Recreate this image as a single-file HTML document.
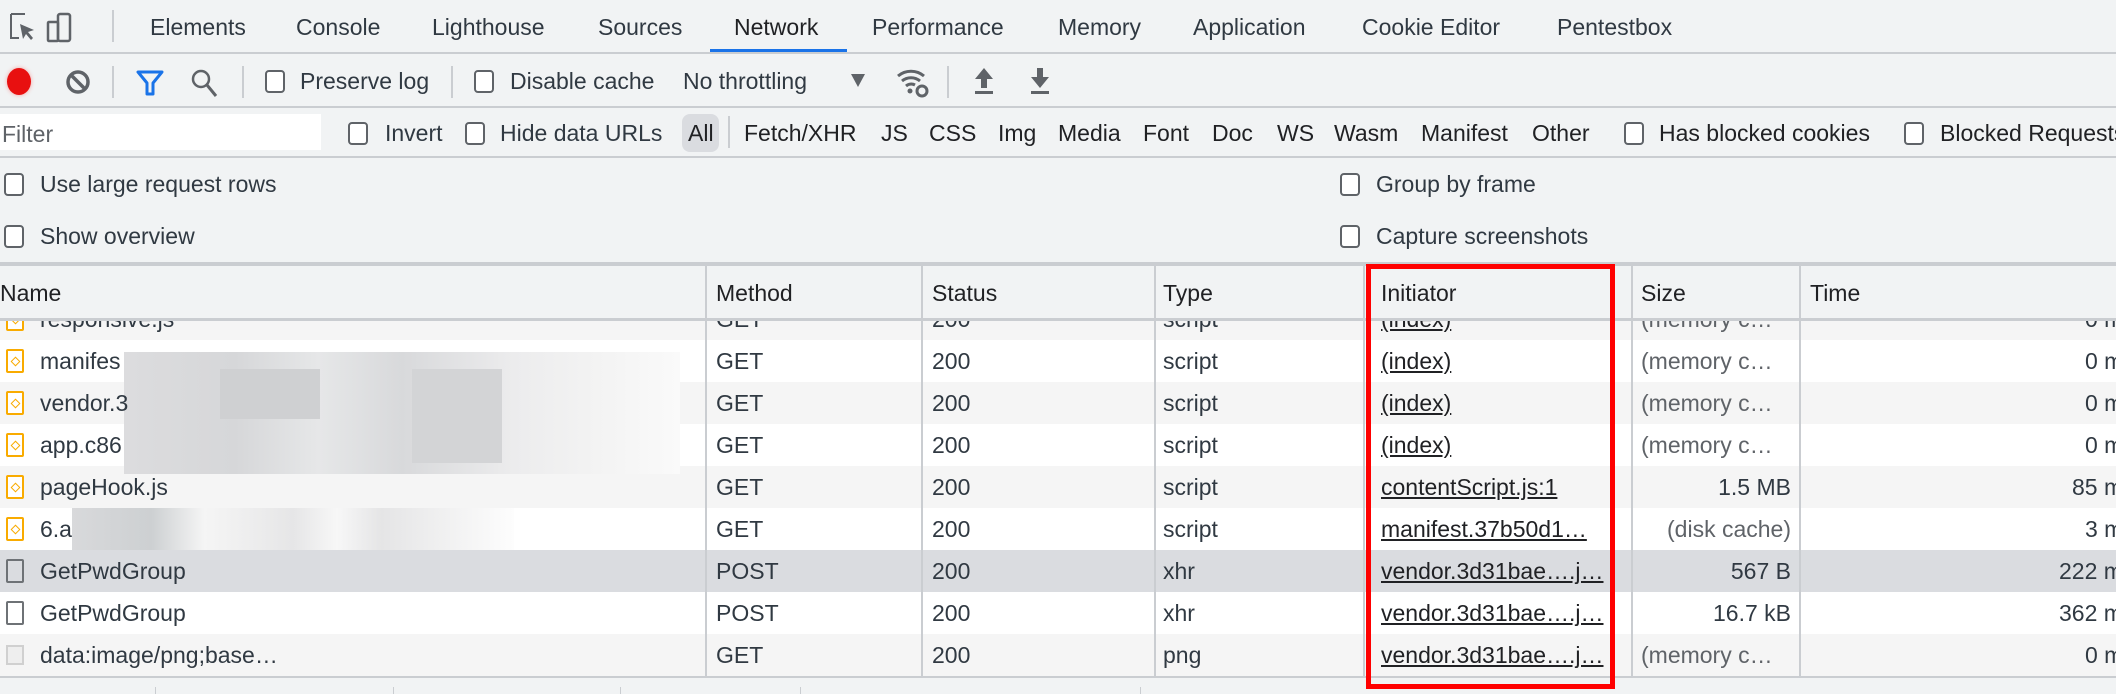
<!DOCTYPE html>
<html><head><meta charset="utf-8"><style>
*{margin:0;padding:0;box-sizing:border-box}
body{width:2116px;height:694px;overflow:hidden;background:#f1f3f4;font-family:"Liberation Sans",sans-serif;font-size:23px;color:#303942;position:relative}
.a{position:absolute;white-space:nowrap}
.t{height:30px;line-height:30px}
.cb{position:absolute;width:20px;height:23px;border:2px solid #5f6368;border-radius:4px;background:#fff}
.hl{position:absolute;left:0;width:2116px;background:#cacdd1}
.vs{position:absolute;width:2px;background:#cacdd1}
.row{position:absolute;left:0;width:2116px;height:42px}
.u{text-decoration:underline}
.ic{position:absolute;left:6px;width:18px;height:24px;border:2px solid #f9ab00;border-radius:2px;background:#fff}
.ic:after{content:"";position:absolute;left:4px;top:7px;width:5px;height:5px;border:1.5px solid #f9ab00;transform:rotate(45deg)}
.dc{position:absolute;left:6px;width:18px;height:24px;border:2px solid #6e7276;border-radius:2px;background:#fff}
</style></head><body>
<!-- tab bar -->
<svg class="a" style="left:8px;top:12px" width="70" height="32" viewBox="0 0 70 32">
<path d="M3 2h14M3 2v24h8M3 2" stroke="#5f6368" stroke-width="2" fill="none"/>
<path d="M12 12l14 6-6 2 5 6-2 2-5-6-3 5z" fill="#5f6368"/>
<rect x="50" y="2" width="12" height="27" rx="2" stroke="#5f6368" stroke-width="2.5" fill="none"/>
<rect x="40" y="10" width="10" height="19" rx="1" stroke="#5f6368" stroke-width="2.5" fill="none"/>
</svg>
<div class="vs" style="left:112px;top:10px;height:32px"></div>
<div class="a t" style="left:150px;top:12px">Elements</div>
<div class="a t" style="left:296px;top:12px">Console</div>
<div class="a t" style="left:432px;top:12px">Lighthouse</div>
<div class="a t" style="left:598px;top:12px">Sources</div>
<div class="a t" style="left:734px;top:12px;color:#202124">Network</div>
<div class="a t" style="left:872px;top:12px">Performance</div>
<div class="a t" style="left:1058px;top:12px">Memory</div>
<div class="a t" style="left:1193px;top:12px">Application</div>
<div class="a t" style="left:1362px;top:12px">Cookie Editor</div>
<div class="a t" style="left:1557px;top:12px">Pentestbox</div>
<div class="a" style="left:710px;top:49px;width:137px;height:4px;background:#1a73e8"></div>
<div class="hl" style="top:52px;height:2px"></div>
<!-- toolbar -->
<div class="a" style="left:7px;top:68px;width:24px;height:27px;border-radius:50%;background:#e81010;box-shadow:0 0 4px #f5a0a0"></div>
<svg class="a" style="left:64px;top:68px" width="28" height="28" viewBox="0 0 28 28"><circle cx="14" cy="14" r="10" stroke="#5f6368" stroke-width="3.5" fill="none"/><path d="M7 7l14 14" stroke="#5f6368" stroke-width="3.5"/></svg>
<div class="vs" style="left:112px;top:66px;height:32px"></div>
<svg class="a" style="left:136px;top:70px" width="28" height="26" viewBox="0 0 28 26"><path d="M2 2h24l-9 11v11h-6V13z" stroke="#1a73e8" stroke-width="3" fill="none" stroke-linejoin="round"/></svg>
<svg class="a" style="left:190px;top:68px" width="28" height="30" viewBox="0 0 28 30"><circle cx="11" cy="11" r="8" stroke="#5f6368" stroke-width="2.5" fill="none"/><path d="M17 17l9 11" stroke="#5f6368" stroke-width="3"/></svg>
<div class="vs" style="left:242px;top:66px;height:32px"></div>
<div class="cb" style="left:265px;top:70px"></div>
<div class="a t" style="left:300px;top:66px">Preserve log</div>
<div class="vs" style="left:451px;top:66px;height:32px"></div>
<div class="cb" style="left:474px;top:70px"></div>
<div class="a t" style="left:510px;top:66px">Disable cache</div>
<div class="a t" style="left:683px;top:66px">No throttling</div>
<div class="a" style="left:851px;top:74px;width:0;height:0;border-left:7px solid transparent;border-right:7px solid transparent;border-top:13px solid #5f6368"></div>
<svg class="a" style="left:895px;top:66px" width="36" height="32" viewBox="0 0 36 32"><path d="M3 10a20 20 0 0 1 26 0M7 15a14 14 0 0 1 18 0M11 20a8 8 0 0 1 9-1" stroke="#5f6368" stroke-width="3" fill="none"/><circle cx="15" cy="25" r="2.5" fill="#5f6368"/><circle cx="27" cy="25" r="5" stroke="#5f6368" stroke-width="3" fill="none"/></svg>
<div class="vs" style="left:947px;top:66px;height:32px"></div>
<svg class="a" style="left:972px;top:66px" width="24" height="30" viewBox="0 0 24 30"><path d="M12 2L3 13h6v9h6v-9h6z" fill="#5f6368"/><rect x="3" y="25" width="18" height="3" fill="#5f6368"/></svg>
<svg class="a" style="left:1028px;top:66px" width="24" height="30" viewBox="0 0 24 30"><path d="M12 22L3 11h6V2h6v9h6z" fill="#5f6368"/><rect x="3" y="25" width="18" height="3" fill="#5f6368"/></svg>
<div class="hl" style="top:106px;height:2px"></div>
<!-- filter row -->
<div class="a" style="left:0;top:114px;width:321px;height:36px;background:#fff"></div>
<div class="a t" style="left:2px;top:119px;color:#5f6368">Filter</div>
<div class="cb" style="left:348px;top:122px"></div>
<div class="a t" style="left:385px;top:118px">Invert</div>
<div class="cb" style="left:465px;top:122px"></div>
<div class="a t" style="left:500px;top:118px">Hide data URLs</div>
<div class="a" style="left:682px;top:114px;width:37px;height:38px;border-radius:8px;background:#dadce0"></div>
<div class="a t" style="left:688px;top:118px;color:#202124">All</div>
<div class="vs" style="left:728px;top:116px;height:32px"></div>
<div class="a t" style="left:744px;top:118px;color:#202124">Fetch/XHR</div>
<div class="a t" style="left:881px;top:118px;color:#202124">JS</div>
<div class="a t" style="left:929px;top:118px;color:#202124">CSS</div>
<div class="a t" style="left:998px;top:118px;color:#202124">Img</div>
<div class="a t" style="left:1058px;top:118px;color:#202124">Media</div>
<div class="a t" style="left:1143px;top:118px;color:#202124">Font</div>
<div class="a t" style="left:1212px;top:118px;color:#202124">Doc</div>
<div class="a t" style="left:1277px;top:118px;color:#202124">WS</div>
<div class="a t" style="left:1334px;top:118px;color:#202124">Wasm</div>
<div class="a t" style="left:1421px;top:118px;color:#202124">Manifest</div>
<div class="a t" style="left:1532px;top:118px;color:#202124">Other</div>
<div class="cb" style="left:1624px;top:122px"></div>
<div class="a t" style="left:1659px;top:118px;color:#202124">Has blocked cookies</div>
<div class="cb" style="left:1904px;top:122px"></div>
<div class="a t" style="left:1940px;top:118px;color:#202124">Blocked Requests</div>
<div class="hl" style="top:156px;height:2px"></div>
<!-- options -->
<div class="cb" style="left:4px;top:173px"></div>
<div class="a t" style="left:40px;top:169px">Use large request rows</div>
<div class="cb" style="left:4px;top:225px"></div>
<div class="a t" style="left:40px;top:221px">Show overview</div>
<div class="cb" style="left:1340px;top:173px"></div>
<div class="a t" style="left:1376px;top:169px">Group by frame</div>
<div class="cb" style="left:1340px;top:225px"></div>
<div class="a t" style="left:1376px;top:221px">Capture screenshots</div>
<div class="hl" style="top:262px;height:4px"></div>
<!-- header -->
<div class="a t" style="left:0;top:278px;color:#202124">Name</div>
<div class="a t" style="left:716px;top:278px;color:#202124">Method</div>
<div class="a t" style="left:932px;top:278px;color:#202124">Status</div>
<div class="a t" style="left:1163px;top:278px;color:#202124">Type</div>
<div class="a t" style="left:1381px;top:278px;color:#202124">Initiator</div>
<div class="a t" style="left:1641px;top:278px;color:#202124">Size</div>
<div class="a t" style="left:1810px;top:278px;color:#202124">Time</div>
<div class="hl" style="top:318px;height:3px"></div>
<!-- rows -->
<div style="position:absolute;left:0;top:321px;width:2116px;height:356px;overflow:hidden;color:#303942">
<div class="row" style="top:-23px;background:#f5f5f5"></div>
<div class="row" style="top:19px;background:#fff"></div>
<div class="row" style="top:61px;background:#f5f5f5"></div>
<div class="row" style="top:103px;background:#fff"></div>
<div class="row" style="top:145px;background:#f5f5f5"></div>
<div class="row" style="top:187px;background:#fff"></div>
<div class="row" style="top:229px;background:#dadce0"></div>
<div class="row" style="top:271px;background:#fff"></div>
<div class="row" style="top:313px;background:#f5f5f5"></div>
<!-- blur -->
<div class="a" style="left:124px;top:31px;width:556px;height:122px;background:linear-gradient(90deg,#dcdcde 0,#d6d7d9 20%,#e6e7e8 35%,#d8d9db 50%,#ececed 70%,#f3f3f3 85%,#fafafa 100%)"></div>
<div class="a" style="left:220px;top:48px;width:100px;height:50px;background:#cfd0d2"></div>
<div class="a" style="left:412px;top:48px;width:90px;height:94px;background:#d3d4d6"></div>
<div class="a" style="left:72px;top:187px;width:442px;height:42px;background:linear-gradient(90deg,#d8d9db 0,#cdd0d2 18%,#f5f5f5 30%,#e6e6e7 50%,#f7f7f7 60%,#e5e5e6 70%,#fdfdfd 100%)"></div>
<!-- icons/names -->
<div class="ic" style="top:-14px"></div><div class="a t" style="left:40px;top:-17px">responsive.js</div>
<div class="ic" style="top:28px"></div><div class="a t" style="left:40px;top:25px">manifes</div>
<div class="ic" style="top:70px"></div><div class="a t" style="left:40px;top:67px">vendor.3</div>
<div class="ic" style="top:112px"></div><div class="a t" style="left:40px;top:109px">app.c86</div>
<div class="ic" style="top:154px"></div><div class="a t" style="left:40px;top:151px">pageHook.js</div>
<div class="ic" style="top:196px"></div><div class="a t" style="left:40px;top:193px">6.a</div>
<div class="dc" style="top:238px;background:transparent"></div><div class="a t" style="left:40px;top:235px">GetPwdGroup</div>
<div class="dc" style="top:280px"></div><div class="a t" style="left:40px;top:277px">GetPwdGroup</div>
<div class="a" style="left:6px;top:324px;width:18px;height:20px;border:2px solid #d0d0d0;background:#eee"></div><div class="a t" style="left:40px;top:319px">data:image/png;base…</div>
<!-- method/status/type -->
<div class="a t" style="left:716px;top:-17px">GET</div><div class="a t" style="left:932px;top:-17px">200</div><div class="a t" style="left:1163px;top:-17px">script</div>
<div class="a t" style="left:716px;top:25px">GET</div><div class="a t" style="left:932px;top:25px">200</div><div class="a t" style="left:1163px;top:25px">script</div>
<div class="a t" style="left:716px;top:67px">GET</div><div class="a t" style="left:932px;top:67px">200</div><div class="a t" style="left:1163px;top:67px">script</div>
<div class="a t" style="left:716px;top:109px">GET</div><div class="a t" style="left:932px;top:109px">200</div><div class="a t" style="left:1163px;top:109px">script</div>
<div class="a t" style="left:716px;top:151px">GET</div><div class="a t" style="left:932px;top:151px">200</div><div class="a t" style="left:1163px;top:151px">script</div>
<div class="a t" style="left:716px;top:193px">GET</div><div class="a t" style="left:932px;top:193px">200</div><div class="a t" style="left:1163px;top:193px">script</div>
<div class="a t" style="left:716px;top:235px">POST</div><div class="a t" style="left:932px;top:235px">200</div><div class="a t" style="left:1163px;top:235px">xhr</div>
<div class="a t" style="left:716px;top:277px">POST</div><div class="a t" style="left:932px;top:277px">200</div><div class="a t" style="left:1163px;top:277px">xhr</div>
<div class="a t" style="left:716px;top:319px">GET</div><div class="a t" style="left:932px;top:319px">200</div><div class="a t" style="left:1163px;top:319px">png</div>
<!-- initiator -->
<div class="a t u" style="left:1381px;top:-17px;color:#202124">(index)</div>
<div class="a t u" style="left:1381px;top:25px;color:#202124">(index)</div>
<div class="a t u" style="left:1381px;top:67px;color:#202124">(index)</div>
<div class="a t u" style="left:1381px;top:109px;color:#202124">(index)</div>
<div class="a t u" style="left:1381px;top:151px;color:#202124">contentScript.js:1</div>
<div class="a t u" style="left:1381px;top:193px;color:#202124">manifest.37b50d1…</div>
<div class="a t u" style="left:1381px;top:235px;color:#202124">vendor.3d31bae….j…</div>
<div class="a t u" style="left:1381px;top:277px;color:#202124">vendor.3d31bae….j…</div>
<div class="a t u" style="left:1381px;top:319px;color:#202124">vendor.3d31bae….j…</div>
<!-- size -->
<div class="a t" style="left:1641px;top:-17px;color:#5f6368">(memory c…</div>
<div class="a t" style="left:1641px;top:25px;color:#5f6368">(memory c…</div>
<div class="a t" style="left:1641px;top:67px;color:#5f6368">(memory c…</div>
<div class="a t" style="left:1641px;top:109px;color:#5f6368">(memory c…</div>
<div class="a t" style="right:325px;top:151px">1.5 MB</div>
<div class="a t" style="right:325px;top:193px;color:#5f6368">(disk cache)</div>
<div class="a t" style="right:325px;top:235px">567 B</div>
<div class="a t" style="right:325px;top:277px">16.7 kB</div>
<div class="a t" style="left:1641px;top:319px;color:#5f6368">(memory c…</div>
<!-- time -->
<div class="a t" style="left:2085px;top:-17px">0 ms</div>
<div class="a t" style="left:2085px;top:25px">0 ms</div>
<div class="a t" style="left:2085px;top:67px">0 ms</div>
<div class="a t" style="left:2085px;top:109px">0 ms</div>
<div class="a t" style="left:2072px;top:151px">85 ms</div>
<div class="a t" style="left:2085px;top:193px">3 ms</div>
<div class="a t" style="left:2059px;top:235px">222 ms</div>
<div class="a t" style="left:2059px;top:277px">362 ms</div>
<div class="a t" style="left:2085px;top:319px">0 ms</div>
</div>
<!-- column dividers -->
<div class="vs" style="left:705px;top:266px;height:411px"></div>
<div class="vs" style="left:921px;top:266px;height:411px"></div>
<div class="vs" style="left:1154px;top:266px;height:411px"></div>
<div class="vs" style="left:1363px;top:266px;height:411px"></div>
<div class="vs" style="left:1631px;top:266px;height:411px"></div>
<div class="vs" style="left:1799px;top:266px;height:411px"></div>
<div class="hl" style="top:676px;height:2px"></div>
<!-- status bar separators -->
<div class="vs" style="left:155px;top:687px;height:7px;width:1px"></div>
<div class="vs" style="left:393px;top:687px;height:7px;width:1px"></div>
<div class="vs" style="left:620px;top:687px;height:7px;width:1px"></div>
<div class="vs" style="left:800px;top:687px;height:7px;width:1px"></div>
<div class="vs" style="left:1140px;top:687px;height:7px;width:1px"></div>
<!-- red box -->
<div class="a" style="left:1366px;top:264px;width:249px;height:425px;border:5px solid #ff0000"></div>
</body></html>
